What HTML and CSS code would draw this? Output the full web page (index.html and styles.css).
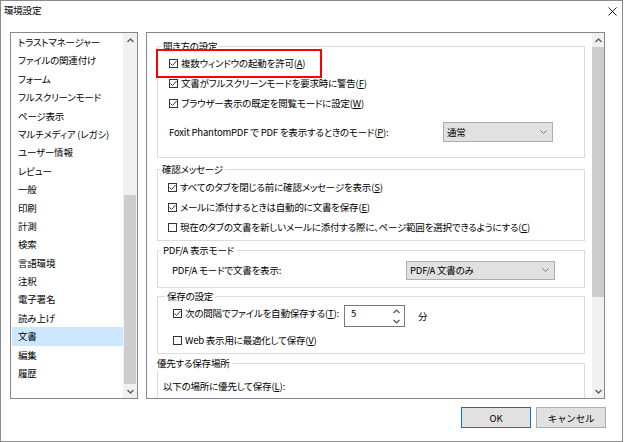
FILE: index.html
```html
<!DOCTYPE html>
<html lang="ja">
<head>
    <meta charset="UTF-8">
    <title>環境設定</title>
    <link rel="stylesheet" href="styles.css">
</head>
<body>
    <div class="dialog">
        <div class="titlebar">
            <span class="title">環境設定</span>
            <svg class="close" width="9" height="9" viewBox="0 0 9 9"><path d="M0.5 0.5 L8.5 8.5 M8.5 0.5 L0.5 8.5" stroke="#222" stroke-width="1" fill="none"/></svg>
        </div>

        <div class="main">
            <!-- category list on the left -->
            <div class="category-list">
                <div class="items">
                    <div class="item">トラストマネージャー</div>
                    <div class="item">ファイルの関連付け</div>
                    <div class="item">フォーム</div>
                    <div class="item">フルスクリーンモード</div>
                    <div class="item">ページ表示</div>
                    <div class="item">マルチメディア (レガシ)</div>
                    <div class="item">ユーザー情報</div>
                    <div class="item">レビュー</div>
                    <div class="item">一般</div>
                    <div class="item">印刷</div>
                    <div class="item">計測</div>
                    <div class="item">検索</div>
                    <div class="item">言語環境</div>
                    <div class="item">注釈</div>
                    <div class="item">電子署名</div>
                    <div class="item">読み上げ</div>
                    <div class="item selected">文書</div>
                    <div class="item">編集</div>
                    <div class="item">履歴</div>
                </div>
                <div class="vscroll list-scroll">
                    <div class="arrow"><svg width="7" height="5" viewBox="0 0 7 5"><path d="M0.5 4 L3.5 1 L6.5 4" stroke="#606060" stroke-width="1.4" fill="none"/></svg></div>
                    <div class="track"></div>
                    <div class="thumb"></div>
                    <div class="arrow"><svg width="7" height="5" viewBox="0 0 7 5"><path d="M0.5 1 L3.5 4 L6.5 1" stroke="#606060" stroke-width="1.4" fill="none"/></svg></div>
                </div>
            </div>

            <!-- settings page for 文書 -->
            <div class="settings-panel">
                <div class="settings-content">
                    <fieldset class="group group-open">
                        <legend>開き方の設定</legend>
                        <div class="check-row"><span class="box checked"><svg width="7" height="7" viewBox="0 0 7 7"><path d="M0.5 3.5 L2.5 5.5 L6.5 1" stroke="#333" stroke-width="1" fill="none"/></svg></span>複数ウィンドウの起動を許可(<u>A</u>)</div>
                        <div class="check-row"><span class="box checked"><svg width="7" height="7" viewBox="0 0 7 7"><path d="M0.5 3.5 L2.5 5.5 L6.5 1" stroke="#333" stroke-width="1" fill="none"/></svg></span>文書がフルスクリーンモードを要求時に警告(<u>F</u>)</div>
                        <div class="check-row"><span class="box checked"><svg width="7" height="7" viewBox="0 0 7 7"><path d="M0.5 3.5 L2.5 5.5 L6.5 1" stroke="#333" stroke-width="1" fill="none"/></svg></span>ブラウザー表示の既定を閲覧モードに設定(<u>W</u>)</div>
                        <div class="field-row mode-row">
                            <span class="field-label mode-label">Foxit PhantomPDF で PDF を表示するときのモード(<u>P</u>):</span>
                            <div class="combo mode-combo"><span>通常</span><svg width="7" height="4" viewBox="0 0 7 4"><path d="M0.5 0.5 L3.5 3.5 L6.5 0.5" stroke="#777" stroke-width="1" fill="none"/></svg></div>
                        </div>
                    </fieldset>

                    <fieldset class="group group-confirm">
                        <legend>確認メッセージ</legend>
                        <div class="check-row"><span class="box checked"><svg width="7" height="7" viewBox="0 0 7 7"><path d="M0.5 3.5 L2.5 5.5 L6.5 1" stroke="#333" stroke-width="1" fill="none"/></svg></span>すべてのタブを閉じる前に確認メッセージを表示(<u>S</u>)</div>
                        <div class="check-row"><span class="box checked"><svg width="7" height="7" viewBox="0 0 7 7"><path d="M0.5 3.5 L2.5 5.5 L6.5 1" stroke="#333" stroke-width="1" fill="none"/></svg></span>メールに添付するときは自動的に文書を保存(<u>E</u>)</div>
                        <div class="check-row"><span class="box"></span>現在のタブの文書を新しいメールに添付する際に、ページ範囲を選択できるようにする(<u>C</u>)</div>
                    </fieldset>

                    <fieldset class="group group-pdfa">
                        <legend>PDF/A 表示モード</legend>
                        <div class="field-row pdfa-row">
                            <span class="field-label pdfa-label">PDF/A モードで文書を表示:</span>
                            <div class="combo pdfa-combo"><span>PDF/A 文書のみ</span><svg width="7" height="4" viewBox="0 0 7 4"><path d="M0.5 0.5 L3.5 3.5 L6.5 0.5" stroke="#777" stroke-width="1" fill="none"/></svg></div>
                        </div>
                    </fieldset>

                    <fieldset class="group group-save">
                        <legend>保存の設定</legend>
                        <div class="autosave-row">
                            <div class="check-row autosave-label"><span class="box checked"><svg width="7" height="7" viewBox="0 0 7 7"><path d="M0.5 3.5 L2.5 5.5 L6.5 1" stroke="#333" stroke-width="1" fill="none"/></svg></span>次の間隔でファイルを自動保存する(<u>T</u>):</div>
                            <div class="spin">
                                <span class="spin-value">5</span>
                                <span class="spin-arrows">
                                    <svg width="7" height="5" viewBox="0 0 7 5"><path d="M0.5 4 L3.5 1 L6.5 4" stroke="#555" stroke-width="1.2" fill="none"/></svg>
                                    <svg width="7" height="5" viewBox="0 0 7 5"><path d="M0.5 1 L3.5 4 L6.5 1" stroke="#555" stroke-width="1.2" fill="none"/></svg>
                                </span>
                            </div>
                            <span class="unit">分</span>
                        </div>
                        <div class="check-row web-row"><span class="box"></span>Web 表示用に最適化して保存(<u>V</u>)</div>
                    </fieldset>

                    <fieldset class="group group-place">
                        <legend>優先する保存場所</legend>
                        <div class="field-row place-row">以下の場所に優先して保存(<u>L</u>):</div>
                    </fieldset>
                </div>
                <div class="vscroll panel-scroll">
                    <div class="arrow"><svg width="7" height="5" viewBox="0 0 7 5"><path d="M0.5 4 L3.5 1 L6.5 4" stroke="#606060" stroke-width="1.4" fill="none"/></svg></div>
                    <div class="thumb"></div>
                    <div class="track"></div>
                    <div class="arrow"><svg width="7" height="5" viewBox="0 0 7 5"><path d="M0.5 1 L3.5 4 L6.5 1" stroke="#606060" stroke-width="1.4" fill="none"/></svg></div>
                </div>
            </div>
        </div>

        <div class="buttons">
            <button type="button" class="btn btn-default">OK</button>
            <button type="button" class="btn">キャンセル</button>
        </div>

        <!-- red annotation box -->
        <div class="highlight"></div>
    </div>
</body>
</html>
```

FILE: styles.css
```css
* {
    box-sizing: border-box;
}

body {
    margin: 0;
    font-family: "Noto Sans CJK JP", sans-serif;
    font-size: 9.5px;
    letter-spacing: -0.2px;
    font-feature-settings: "palt";
    color: #000;
    background-color: #fff;
}

u {
    text-decoration-thickness: 1px;
    text-underline-offset: 1px;
}

.dialog {
    position: relative;
    width: 623px;
    height: 442px;
    border: 1px solid #8a8a8a;
    background-color: #fff;
}

.titlebar {
    height: 31px;
    display: flex;
    justify-content: space-between;
    align-items: flex-start;
    padding: 2px 5px 0 3px;
    line-height: 14px;
}

.close {
    margin-top: 4px;
}

.main {
    display: flex;
    height: 367px;
    padding-left: 9px;
}

/* left category list */
.category-list {
    width: 128px;
    border: 1px solid #828790;
    display: flex;
}

.items {
    flex: 1;
    padding-left: 1px;
}

.item {
    height: 18.4px;
    line-height: 18.4px;
    padding-left: 6px;
    white-space: nowrap;
}

.item.selected {
    background-color: #cce8ff;
}

/* fake scrollbars */
.vscroll {
    display: flex;
    flex-direction: column;
    background-color: #f0f0f0;
}

.vscroll .arrow {
    height: 14px;
    display: flex;
    justify-content: center;
    align-items: center;
    flex: none;
}

.vscroll .thumb {
    background-color: #cdcdcd;
    margin: 0 1px;
}

.vscroll .track {
    flex: 1;
}

.list-scroll {
    width: 14px;
}

.list-scroll .thumb {
    height: 189px;
}

.panel-scroll {
    width: 12px;
}

.panel-scroll .thumb {
    height: 250px;
    margin: 0;
}

/* right settings panel */
.settings-panel {
    width: 459px;
    margin-left: 8px;
    border: 1px solid #828790;
    display: flex;
    overflow: hidden;
}

.settings-content {
    flex: 1;
    padding: 7px 7px 0 10px;
    overflow: hidden;
}

.group {
    margin: 0;
    border: 1px solid #dcdcdc;
    padding: 0 10px 0 11px;
    min-width: 0;
}

.group legend {
    padding: 0 2px;
    margin-left: -8px;
    line-height: 13px;
}

.check-row {
    display: flex;
    align-items: center;
    height: 20px;
    white-space: nowrap;
}

.box {
    width: 9px;
    height: 9px;
    border: 1px solid #333;
    margin-right: 3px;
    flex: none;
    display: flex;
    justify-content: center;
    align-items: center;
    background-color: #fff;
}

.field-row {
    display: flex;
    align-items: center;
    height: 20px;
    white-space: nowrap;
}

.combo {
    display: flex;
    justify-content: space-between;
    align-items: center;
    background-color: #e1e1e1;
    border: 1px solid #adadad;
    padding: 0 5px 0 3px;
}

.group-open {
    padding-bottom: 15px;
}

.mode-row {
    margin-top: 9px;
}

.mode-label {
    width: 274px;
}

.mode-combo {
    width: 110px;
    height: 20px;
}

.group-confirm {
    margin-top: 5px;
    padding-top: 1px;
    padding-bottom: 3px;
    padding-left: 10px;
}

.group-pdfa {
    margin-top: 3px;
    padding-top: 3px;
    padding-bottom: 7px;
}

.pdfa-label {
    width: 237px;
    padding-left: 3px;
}

.pdfa-combo {
    width: 149px;
    height: 19px;
}

.group-save {
    margin-top: 2px;
    padding-bottom: 3px;
    padding-left: 15px;
}

.autosave-row {
    display: flex;
    align-items: flex-start;
}

.autosave-label {
    width: 171px;
}

.spin {
    width: 61px;
    height: 22px;
    margin-top: 2px;
    border: 1px solid #7a7a7a;
    display: flex;
    justify-content: space-between;
    padding: 0 4px 0 6px;
}

.spin-value {
    line-height: 14px;
}

.spin-arrows {
    display: flex;
    flex-direction: column;
    justify-content: space-between;
    padding: 3px 0 2px;
}

.unit {
    margin: 3px 0 0 13px;
    line-height: 20px;
}

.web-row {
    margin-top: 3px;
}

.group-place {
    margin-top: 3px;
    padding-top: 6px;
    padding-bottom: 40px;
    padding-left: 5px;
}

/* bottom buttons */
.buttons {
    display: flex;
    justify-content: flex-end;
    gap: 5px;
    margin-top: 8px;
    padding-right: 16px;
}

.btn {
    width: 70px;
    height: 21px;
    font-family: inherit;
    font-size: 9.5px;
    letter-spacing: -0.2px;
    background-color: #e1e1e1;
    border: 1px solid #adadad;
    padding: 0;
    color: #000;
}

.btn-default {
    border-color: #0078d7;
}

.highlight {
    position: absolute;
    left: 155px;
    top: 48px;
    width: 166px;
    height: 29px;
    border: 2px solid #f00;
}
```
